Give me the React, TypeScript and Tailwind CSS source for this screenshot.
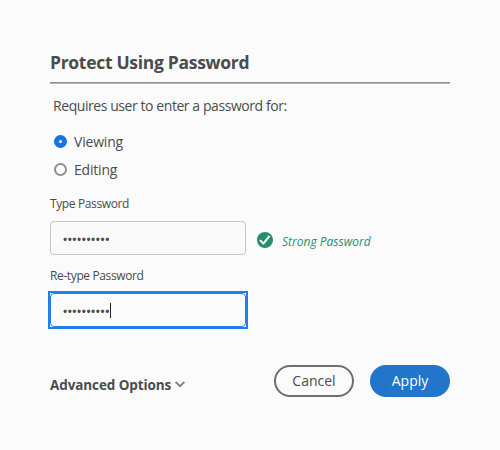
import { useState } from "react";

const MASK = "••••••••••";

type RadioProps = {
  label: string;
  checked: boolean;
  onSelect: () => void;
};

function Radio({ label, checked, onSelect }: RadioProps) {
  return (
    <button
      type="button"
      role="radio"
      aria-checked={checked}
      onClick={onSelect}
      className="flex h-7 items-start pl-1"
    >
      <span
        className={
          checked
            ? "mt-[7px] size-[13px] rounded-full border-[5px] border-[#1473e6] bg-white"
            : "mt-[7px] size-[13px] rounded-full border-2 border-[#8e8e8e] bg-white"
        }
      />
      <span className="ml-[7px] text-[14px] leading-7 tracking-[-0.2px]">{label}</span>
    </button>
  );
}

type PasswordFieldProps = {
  label: string;
  focused?: boolean;
};

function PasswordField({ label, focused }: PasswordFieldProps) {
  return (
    <div className="w-[196px]">
      <div className="h-4 text-[12px] leading-4 tracking-[-0.38px]">{label}</div>
      <div
        className={
          focused
            ? "mt-[9px] bg-white outline-2 outline-[#207eee]"
            : "mt-[9px]"
        }
      >
        <div
          className={
            focused
              ? "flex h-[34px] items-center rounded border border-[#207eee] bg-[#fbfbfb] pl-3"
              : "flex h-[34px] items-center rounded border border-[#c5c5c5] bg-[#fafafa] pl-3"
          }
        >
          <span className="pt-0.5 text-[11px] leading-4 font-bold tracking-[0.55px]">{MASK}</span>
          {focused && <span className="h-[15px] w-px bg-[#222]" />}
        </div>
      </div>
    </div>
  );
}

export default function App() {
  const [mode, setMode] = useState("viewing");

  return (
    <div className="h-[450px] w-[500px] bg-[#fbfbfb] px-[50px] pt-[49px] font-['Open_Sans','Noto_Sans',sans-serif] text-[#4b4b4b]">
      <h1 className="h-[33px] text-[17.5px] leading-[27px] font-bold tracking-[-0.3px] whitespace-nowrap">
        Protect Using Password
      </h1>
      <div className="h-0.5 border-t border-b border-t-[#909090] border-b-[#b5b5b5]" />

      <p className="mt-3 h-5 pl-[3px] text-[14px] leading-5 tracking-[-0.43px] whitespace-nowrap">
        Requires user to enter a password for:
      </p>
      <div role="radiogroup" className="mt-3 flex flex-col items-start">
        <Radio label="Viewing" checked={mode === "viewing"} onSelect={() => setMode("viewing")} />
        <Radio label="Editing" checked={mode === "editing"} onSelect={() => setMode("editing")} />
      </div>

      <div className="mt-3 flex items-end">
        <PasswordField label="Type Password" />
        <div className="ml-[11px] flex h-[30px] items-center">
          <svg viewBox="0 0 16 16" className="size-4">
            <circle cx="8" cy="8" r="8" fill="#268e6c" />
            <path d="M3 8.1 6.4 11.6 12.5 4" fill="none" stroke="#fff" strokeWidth="2" />
          </svg>
          <span className="mt-[3px] ml-[9px] text-[12px] leading-4 whitespace-nowrap text-[#268e6c] italic">
            Strong Password
          </span>
        </div>
      </div>
      <div className="mt-[13px]">
        <PasswordField label="Re-type Password" focused />
      </div>

      <div className="mt-[38px] flex h-8 items-center">
        <button type="button" className="mt-2 flex items-center text-[13.5px] leading-5 font-bold tracking-[-0.1px] whitespace-nowrap">
          Advanced Options
          <svg viewBox="0 0 10 7" className="mb-0.5 ml-1 h-[7px] w-2.5">
            <path d="M0.6 1 5 5.2 9.4 1" fill="none" stroke="#808080" strokeWidth="1.9" />
          </svg>
        </button>
        <button
          type="button"
          className="ml-auto h-8 w-20 rounded-full border-2 border-[#6e6e6e] text-[14px] leading-[26px]"
        >
          Cancel
        </button>
        <button
          type="button"
          className="ml-4 h-8 w-20 rounded-full bg-[#2175cb] text-[14px] leading-[30px] text-white"
        >
          Apply
        </button>
      </div>
    </div>
  );
}
